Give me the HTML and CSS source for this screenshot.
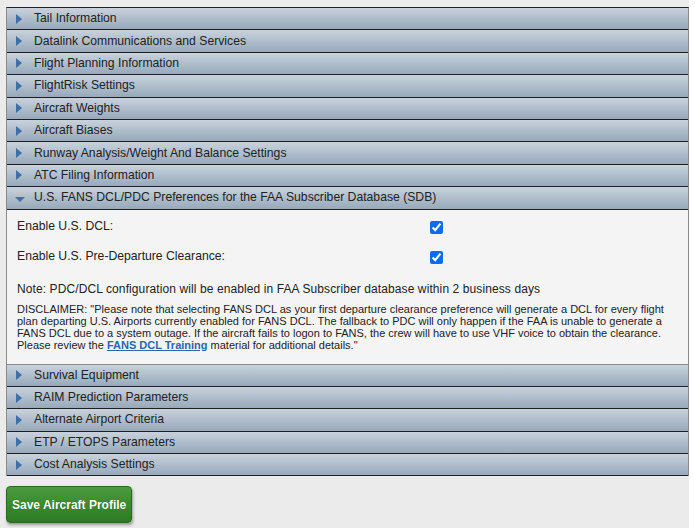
FILE: index.html
```html
<!DOCTYPE html>
<html>
<head>
<meta charset="utf-8">
<link rel="stylesheet" href="styles.css">
</head>
<body>
<div class="page">
  <div class="accordion">
    <div class="hdr"><span class="arrow right"></span>Tail Information</div>
    <div class="hdr"><span class="arrow right"></span>Datalink Communications and Services</div>
    <div class="hdr"><span class="arrow right"></span>Flight Planning Information</div>
    <div class="hdr"><span class="arrow right"></span>FlightRisk Settings</div>
    <div class="hdr"><span class="arrow right"></span>Aircraft Weights</div>
    <div class="hdr"><span class="arrow right"></span>Aircraft Biases</div>
    <div class="hdr"><span class="arrow right"></span>Runway Analysis/Weight And Balance Settings</div>
    <div class="hdr"><span class="arrow right"></span>ATC Filing Information</div>
    <div class="hdr open"><span class="arrow down"></span>U.S. FANS DCL/PDC Preferences for the FAA Subscriber Database (SDB)</div>
    <div class="content">
      <div class="field"><span class="label">Enable U.S. DCL:</span><input type="checkbox" checked></div>
      <div class="field"><span class="label">Enable U.S. Pre-Departure Clearance:</span><input type="checkbox" checked></div>
      <p class="note">Note: PDC/DCL configuration will be enabled in FAA Subscriber database within 2 business days</p>
      <p class="disclaimer">DISCLAIMER: "Please note that selecting FANS DCL as your first departure clearance preference will generate a DCL for every flight plan departing U.S. Airports currently enabled for FANS DCL. The fallback to PDC will only happen if the FAA is unable to generate a FANS DCL due to a system outage. If the aircraft fails to logon to FANS, the crew will have to use VHF voice to obtain the clearance. Please review the <a href="#">FANS DCL Training</a> material for additional details."</p>
    </div>
    <div class="hdr"><span class="arrow right"></span>Survival Equipment</div>
    <div class="hdr"><span class="arrow right"></span>RAIM Prediction Parameters</div>
    <div class="hdr"><span class="arrow right"></span>Alternate Airport Criteria</div>
    <div class="hdr"><span class="arrow right"></span>ETP / ETOPS Parameters</div>
    <div class="hdr"><span class="arrow right"></span>Cost Analysis Settings</div>
  </div>
  <div class="actions">
    <button class="save">Save Aircraft Profile</button>
  </div>
</div>
</body>
</html>
```
FILE: styles.css
```css
html, body {
  margin: 0;
  padding: 0;
  background: #ffffff;
}
body {
  font-family: "Liberation Sans", Arial, sans-serif;
  color: #222;
}
.page {
  width: 689px;
  background: #ebebeb;
  padding: 7px 0 5px 6px;
  box-sizing: border-box;
}
.accordion {
  width: 683px;
  border-left: 1px solid #8a8a8a;
  border-right: 1px solid #8a8a8a;
  border-top: 1px solid #222;
  box-sizing: border-box;
}
.hdr {
  height: 21.4px;
  line-height: 21px;
  font-size: 12.2px;
  color: #222;
  background: linear-gradient(#c8d2dc, #97a9bb);
  border-bottom: 1px solid #1f1f1f;
  display: flex;
  align-items: center;
  padding-left: 9px;
}
.arrow {
  display: inline-block;
  width: 0;
  height: 0;
}
.arrow.right {
  border-top: 5px solid transparent;
  border-bottom: 5px solid transparent;
  border-left: 6px solid #3d6fa8;
  margin-right: 12px;
}
.arrow.down {
  border-left: 5px solid transparent;
  border-right: 5px solid transparent;
  border-top: 5px solid #3d6fa8;
  margin-top: 3px;
  margin-left: -1px;
  margin-right: 9px;
}
.content {
  background: #f4f4f4;
  padding: 1px 10px 13px 10px;
  border-bottom: 1px solid #8a8a8a;
}
.field {
  display: flex;
  align-items: center;
  height: 30px;
  font-size: 12.2px;
}
.label {
  width: 413px;
}
.field input {
  margin: 3px 0 0 0;
  width: 13px;
  height: 13px;
  accent-color: #0b6cf0;
}
.note {
  font-size: 12px;
  letter-spacing: 0.1px;
  margin: 10px 0 0 0;
  line-height: 16px;
}
.disclaimer {
  font-size: 11px;
  line-height: 12px;
  margin: 6px 0 0 0;
}
.disclaimer a {
  color: #2b63b5;
  font-weight: bold;
}
.actions {
  padding-top: 10px;
}
.save {
  font-family: "Liberation Sans", Arial, sans-serif;
  font-weight: bold;
  font-size: 12px;
  color: #fff;
  background: linear-gradient(#4c9a3d, #2c7a22);
  border: 1px solid #2a6a20;
  border-radius: 4px;
  height: 37px;
  padding: 0 5px;
  box-shadow: 1px 2px 3px rgba(0,0,0,0.35);
  text-shadow: 0 0 1px rgba(0,0,0,0.4);
}
```
